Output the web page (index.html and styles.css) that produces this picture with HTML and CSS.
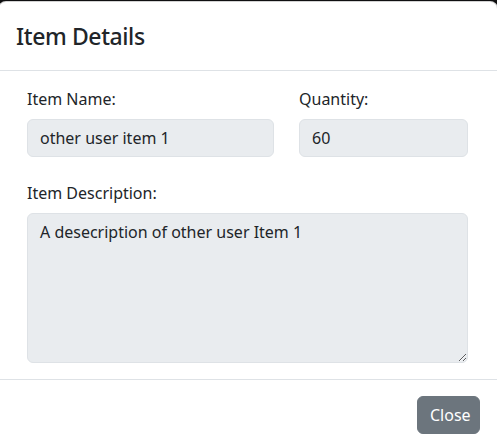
FILE: index.html
```html
<!DOCTYPE html>
<html>
<head>
<meta charset="utf-8">
<link rel="stylesheet" href="styles.css">
</head>
<body>
<div class="modal">
  <div class="modal-header">
    <h4 class="modal-title">Item Details</h4>
  </div>
  <div class="modal-body">
    <div class="row">
      <div class="field col-name">
        <label class="label">Item Name:</label>
        <input class="control" type="text" value="other user item 1" readonly>
      </div>
      <div class="field col-qty">
        <label class="label">Quantity:</label>
        <input class="control" type="text" value="60" readonly>
      </div>
    </div>
    <div class="field">
      <label class="label">Item Description:</label>
      <textarea class="control area" readonly>A desecription of other user Item 1</textarea>
    </div>
  </div>
  <div class="modal-footer">
    <button class="btn">Close</button>
  </div>
</div>
</body>
</html>
```
FILE: styles.css
```css
* { box-sizing: border-box; }
html, body { margin: 0; padding: 0; }
body {
  background: #0f0f10;
  font-family: "Noto Sans", "Open Sans", sans-serif;
  color: #212529;
  height: 447px;
  overflow: hidden;
}
.modal {
  margin: 1px 0 0 -2px;
  width: 500px;
  background: #fff;
  border: 1px solid rgba(0,0,0,0.175);
  border-bottom: none;
  border-radius: 8px 8px 0 0;
  height: 446px;
}
.modal-header {
  padding: 16px 17px;
  border-bottom: 1px solid #dee2e6;
}
.modal-title {
  margin: 0;
  font-size: 23px;
  line-height: 36px;
  font-weight: 500;
  letter-spacing: -0.4px;
}
.modal-body {
  padding: 16px 29px 16px 28px;
}
.row {
  display: flex;
  gap: 25px;
  margin-bottom: 24px;
}
.field { display: flex; flex-direction: column; }
.col-name { width: 247px; }
.col-qty { flex: 1; }
.label {
  font-size: 16px;
  line-height: 24px;
  margin-bottom: 8px;
}
.control {
  font-family: inherit;
  font-size: 16px;
  line-height: 24px;
  color: #212529;
  background: #e9ecef;
  border: 1px solid #dee2e6;
  border-radius: 6px;
  padding: 6px 12px;
  height: 38px;
  width: 100%;
  outline: none;
}
.area {
  height: 150px;
  resize: vertical;
  display: block;
}
.modal-footer {
  border-top: 1px solid #dee2e6;
  padding: 16px 17px;
  display: flex;
  justify-content: flex-end;
}
.btn {
  font-family: inherit;
  font-size: 16px;
  line-height: 24px;
  color: #fff;
  background: #6c757d;
  border: 1px solid #6c757d;
  border-radius: 6px;
  padding: 6px 12px;
  width: 63px;
  height: 38px;
}
```
